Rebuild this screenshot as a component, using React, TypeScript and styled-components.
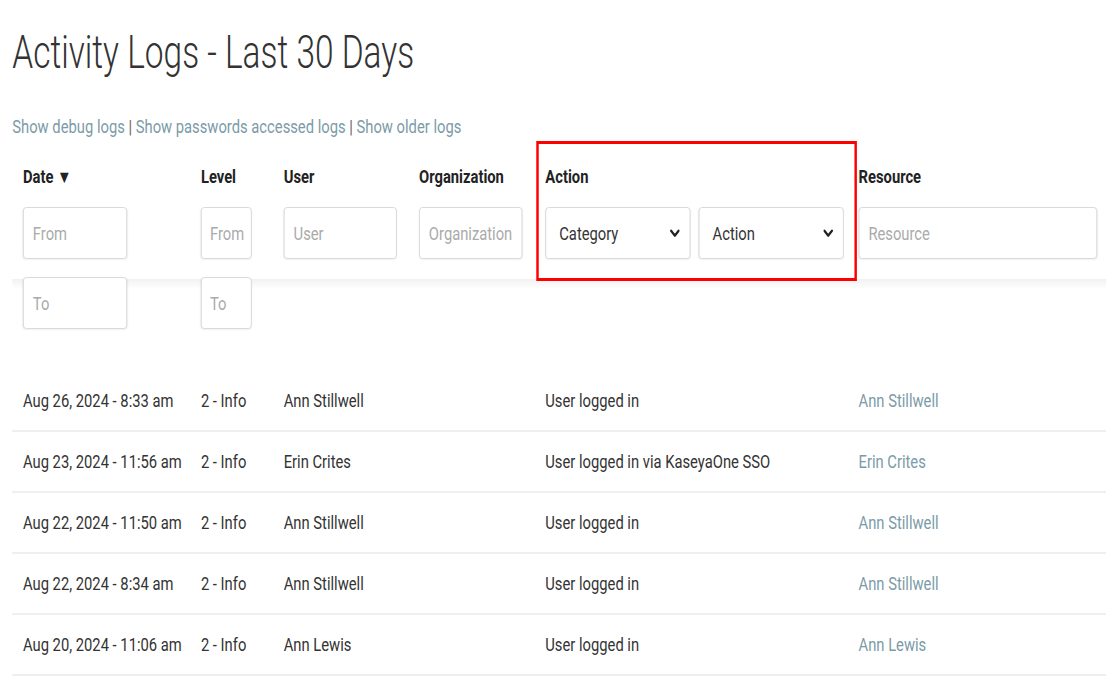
import React from "react";
import styled, { createGlobalStyle } from "styled-components";

const SCALE = 0.82;

const Global = createGlobalStyle`
  html, body { margin: 0; padding: 0; background: #fff; overflow: hidden; }
  body { font-family: Roboto, "Noto Sans", Arial, sans-serif; color: #333; }
  * { box-sizing: border-box; }
`;

const Page = styled.div`
  width: ${1106 / SCALE}px;
  transform: scaleX(${SCALE});
  transform-origin: 0 0;
  padding: 25px 0 0 15px;
`;

const Title = styled.h1`
  display: inline-block;
  margin: 0;
  font-size: 47px;
  line-height: 54px;
  font-weight: 300;
  color: #333;
  transform: scaleX(0.868);
  transform-origin: 0 0;
  white-space: nowrap;
`;

const Links = styled.div`
  margin-top: 36px;
  font-size: 18px;
  line-height: 24px;
  color: #666;
`;

const LinkText = styled.a`
  color: #7b9ba7;
  text-decoration: none;
`;

const cols = "217px 101px 165px 154px 382px 1fr";

const HeaderGrid = styled.div`
  display: grid;
  grid-template-columns: ${cols};
  margin-top: 2px;
  padding-bottom: 42px;
  position: relative;
  &::before {
    content: "";
    position: absolute;
    left: 0;
    right: 0;
    top: 138px;
    height: 10px;
    background: linear-gradient(#f1f1f1, rgba(255, 255, 255, 0));
  }
`;

const HeadCell = styled.div`
  position: relative;
  padding: 25px 0 0 13px;
  display: flex;
  flex-direction: column;
  gap: 19px;
`;

const Label = styled.div`
  font-size: 18px;
  line-height: 22px;
  font-weight: 700;
  color: #222;
  white-space: nowrap;
`;

const Stack = styled.div`
  display: flex;
  flex-direction: column;
  gap: 18px;
  position: relative;
  z-index: 1;
`;

const InlineControls = styled.div`
  display: flex;
  gap: 10px;
  position: relative;
  z-index: 1;
`;

const Field = styled.input<{ $w: number; $tight?: boolean }>`
  width: ${(p) => p.$w}px;
  height: 52px;
  padding: ${(p) => (p.$tight ? "0 2px 0 10px" : "0 11px")};
  border: 1px solid #d6d6d6;
  border-radius: 4px;
  background: #fff;
  box-shadow: 0 1px 2px rgba(0, 0, 0, 0.06);
  font-family: inherit;
  font-size: 18px;
  color: #333;
  outline: none;
  &::placeholder {
    color: #aaa;
  }
`;

const SelectBox = styled.div`
  width: 177px;
  height: 52px;
  padding: 0 12px 0 16px;
  border: 1px solid #d6d6d6;
  border-radius: 4px;
  background: #fff;
  box-shadow: 0 1px 2px rgba(0, 0, 0, 0.06);
  display: flex;
  align-items: center;
  justify-content: space-between;
  font-size: 18px;
  color: #333;
`;

const Highlight = styled.div`
  position: absolute;
  left: 2px;
  top: 0;
  width: 391px;
  height: 140px;
  border: 3px solid #f00;
  border-left-width: 3.6px;
  border-right-width: 3.6px;
  pointer-events: none;
  z-index: 2;
`;

const Row = styled.div`
  display: grid;
  grid-template-columns: ${cols};
  height: 61px;
  align-items: center;
  border-bottom: 2px solid #efefef;
`;

const Cell = styled.div<{ $link?: boolean }>`
  padding-left: 13px;
  font-size: 18px;
  white-space: nowrap;
  color: ${(p) => (p.$link ? "#7b9ba7" : "#333")};
`;

const Chevron = () => (
  <svg width="12" height="9" viewBox="0 0 12 9" aria-hidden>
    <path d="M1.5 1.8 L6 6.6 L10.5 1.8" fill="none" stroke="#222" strokeWidth="2.6" strokeLinecap="round" strokeLinejoin="round" />
  </svg>
);

const rows = [
  ["Aug 26, 2024 - 8:33 am", "2 - Info", "Ann Stillwell", "", "User logged in", "Ann Stillwell"],
  ["Aug 23, 2024 - 11:56 am", "2 - Info", "Erin Crites", "", "User logged in via KaseyaOne SSO", "Erin Crites"],
  ["Aug 22, 2024 - 11:50 am", "2 - Info", "Ann Stillwell", "", "User logged in", "Ann Stillwell"],
  ["Aug 22, 2024 - 8:34 am", "2 - Info", "Ann Stillwell", "", "User logged in", "Ann Stillwell"],
  ["Aug 20, 2024 - 11:06 am", "2 - Info", "Ann Lewis", "", "User logged in", "Ann Lewis"],
];

export default function App() {
  return (
    <>
      <Global />
      <Page>
        <Title>Activity Logs - Last 30 Days</Title>
        <Links>
          <LinkText href="#">Show debug logs</LinkText> | <LinkText href="#">Show passwords accessed logs</LinkText> |{" "}
          <LinkText href="#">Show older logs</LinkText>
        </Links>
        <HeaderGrid>
          <HeadCell>
            <Label>Date ▼</Label>
            <Stack>
              <Field $w={127} placeholder="From" />
              <Field $w={127} placeholder="To" />
            </Stack>
          </HeadCell>
          <HeadCell>
            <Label>Level</Label>
            <Stack>
              <Field $w={62} $tight placeholder="From" />
              <Field $w={62} $tight placeholder="To" />
            </Stack>
          </HeadCell>
          <HeadCell>
            <Label>User</Label>
            <Stack>
              <Field $w={138} placeholder="User" />
            </Stack>
          </HeadCell>
          <HeadCell>
            <Label>Organization</Label>
            <Stack>
              <Field $w={126} placeholder="Organization" />
            </Stack>
          </HeadCell>
          <HeadCell>
            <Highlight />
            <Label>Action</Label>
            <InlineControls>
              <SelectBox>
                <span>Category</span>
                <Chevron />
              </SelectBox>
              <SelectBox>
                <span>Action</span>
                <Chevron />
              </SelectBox>
            </InlineControls>
          </HeadCell>
          <HeadCell>
            <Label>Resource</Label>
            <Stack>
              <Field $w={291} placeholder="Resource" />
            </Stack>
          </HeadCell>
        </HeaderGrid>
        {rows.map((r, i) => (
          <Row key={i}>
            {r.map((c, j) => (
              <Cell key={j} $link={j === 5}>
                {c}
              </Cell>
            ))}
          </Row>
        ))}
      </Page>
    </>
  );
}
